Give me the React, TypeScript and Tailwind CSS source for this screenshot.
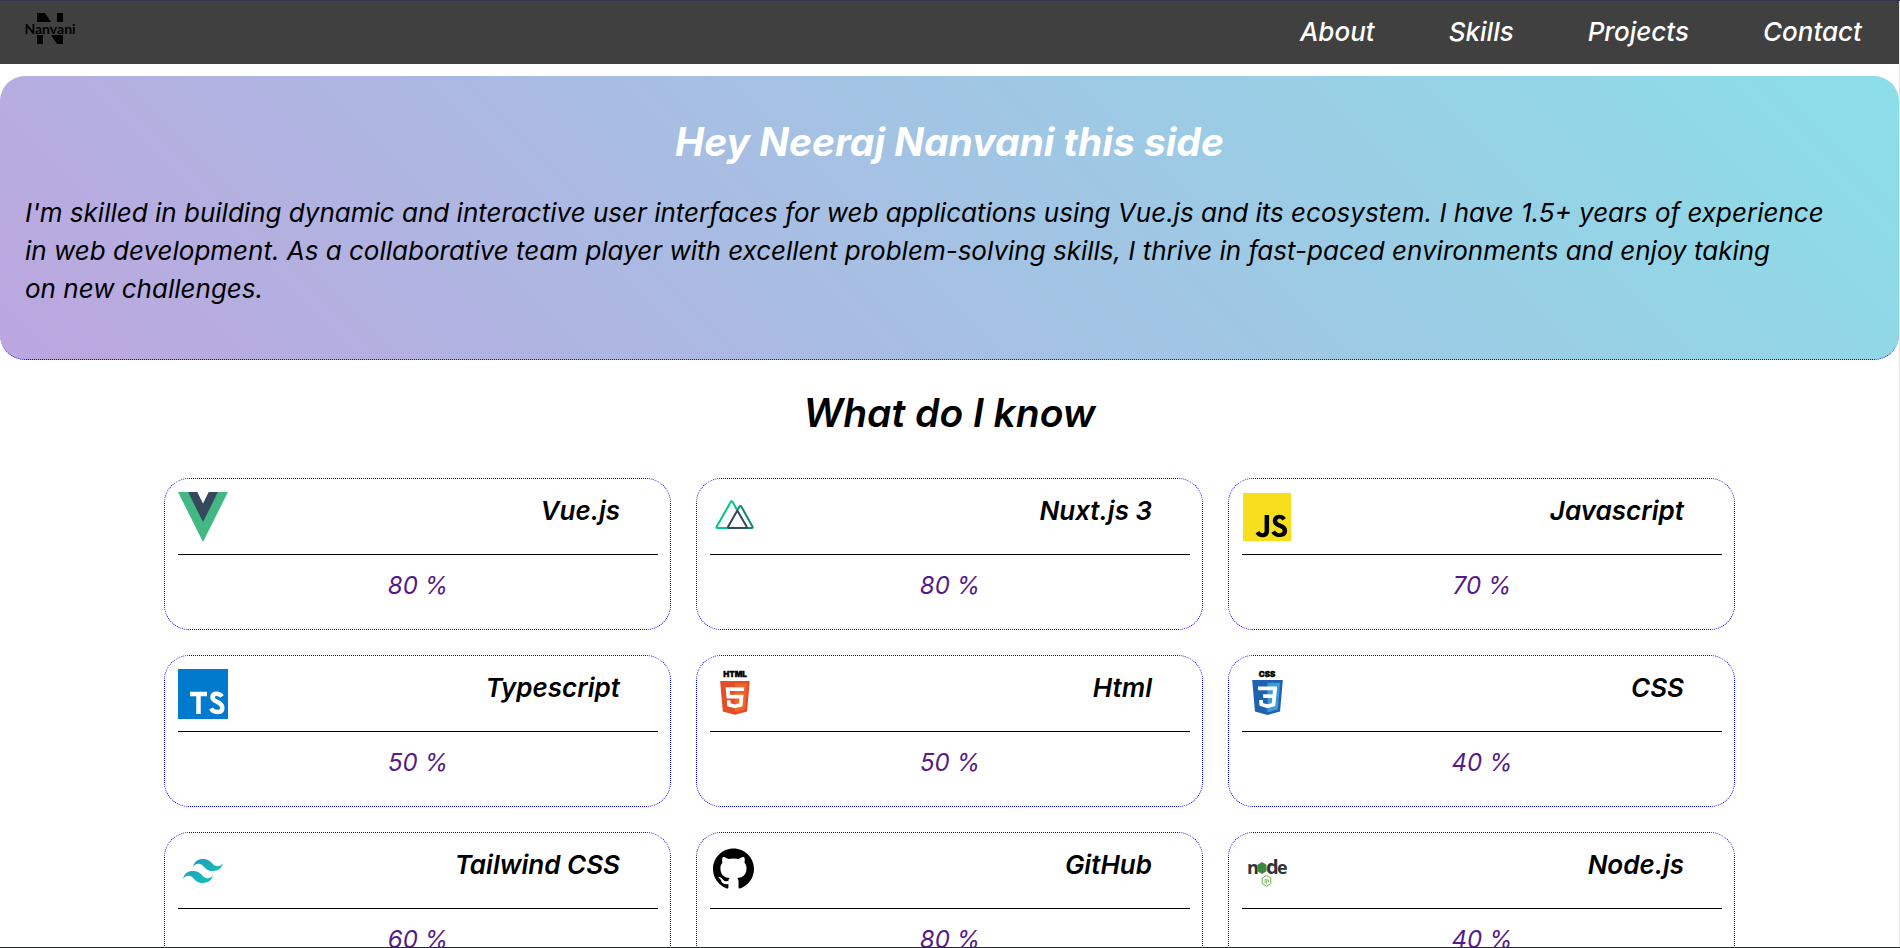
import type { ReactNode } from "react";
import { SiGithub, SiJavascript, SiTailwindcss, SiTypescript } from "react-icons/si";

const navLinks = ["About", "Skills", "Projects", "Contact"];

function Logo() {
  return (
    <svg viewBox="0 0 50 32" className="h-8 w-[50px] overflow-visible" role="img" aria-label="Nanvani">
      <path d="M12 0h8l6 9H12zM32 0h6v9h-6zM12 22h6v9h-6zM26 22h12v9h-6z" fill="#000" />
      <text x="25" y="20.500" textAnchor="middle" fontSize="14" fontWeight="700" fontFamily="Lato, sans-serif">
        Nanvani
      </text>
    </svg>
  );
}

function VueIcon() {
  return (
    <svg viewBox="0 0 50 50" className="size-full">
      <path d="M0 0h10l15 26L40 0h10L25 50z" fill="#42b883" />
      <path d="M10 0h9.3L25 11.500 30.700 0H40L25 30z" fill="#35495e" />
    </svg>
  );
}

function NuxtIcon() {
  return (
    <svg viewBox="0 0 50 50" className="size-full" fill="none" strokeWidth="2" strokeLinejoin="round" strokeLinecap="round">
      <path d="M18 36H7.500q-1.500 0-.7-1.500L20.700 10q1-1.600 2 0l4 7.200" stroke="#00c58e" />
      <path d="M28 17l1.400-2.300q1-1.600 2 0l11 19.800q.8 1.500-.7 1.500H37" stroke="#108775" />
      <path d="M27.300 18.500L36.600 34.500q.6 1.500-1 1.500H19q-1.500 0-.8-1.500z" stroke="#2f495e" />
    </svg>
  );
}

function JavascriptIcon() {
  return (
    <svg viewBox="0 0 50 50" className="size-full">
      <rect x="4" y="15" width="42" height="32" fill="#000" />
      <SiJavascript x={1} y={1} size={48} color="#f7df1e" />
    </svg>
  );
}

function TypescriptIcon() {
  return (
    <svg viewBox="0 0 50 50" className="size-full">
      <rect width="50" height="50" fill="#007acc" />
      <g fill="none" stroke="#fff" strokeWidth="4.500">
        <path d="M12 25h17M20.500 25v20" />
        <path d="M44 27.500q-2-2.700-5.300-2.700-4.200 0-4.200 3.500 0 2.500 4.500 4.500 5.300 2.200 5.300 5.900 0 4.300-5 4.300-4.300 0-6.300-3.500" />
      </g>
    </svg>
  );
}

function HtmlIcon() {
  return (
    <svg viewBox="0 0 50 50" className="size-full">
      <text x="25" y="8" textAnchor="middle" fontSize="8" fontWeight="900" fontFamily="Inter, sans-serif" stroke="#000" strokeWidth=".4">
        HTML
      </text>
      <g transform="translate(8 12) scale(1.410)">
        <path d="M1.500 0h21l-1.910 21.563L11.977 24l-8.564-2.438z" fill="#e44d26" />
        <path d="M12 1.800h8.600l-1.600 18.400-7 2z" fill="#f16529" />
        <path d="M8.531 9.750l-.232-2.718 10.059.003.230-2.622L5.412 4.410l.698 8.010h9.126l-.326 3.426-2.910.804-2.955-.810-.188-2.110H6.248l.330 4.171L12 19.351l5.379-1.443.744-8.157z" fill="#fff" />
      </g>
    </svg>
  );
}

function CssIcon() {
  return (
    <svg viewBox="0 0 50 50" className="size-full">
      <text x="25" y="8" textAnchor="middle" fontSize="8" fontWeight="900" fontFamily="Inter, sans-serif" stroke="#000" strokeWidth=".4">
        CSS
      </text>
      <g transform="translate(8 11) scale(1.460)">
        <path d="M1.500 0h21l-1.910 21.563L11.977 24l-8.565-2.438z" fill="#2062af" />
        <path d="M12 1.800h8.600l-1.600 18.400-7 2z" fill="#3c9cd7" />
        <path d="M18.590 4.413L5.410 4.410l.213 2.622 10.125.002-.255 2.716h-6.640l.240 2.573h6.182l-.366 3.523-2.910.804-2.956-.810-.188-2.110h-2.610l.290 3.855L12 19.288l5.373-1.530z" fill="#fff" />
      </g>
    </svg>
  );
}

function TailwindIcon() {
  return (
    <svg viewBox="0 0 50 50" className="size-full">
      <defs>
        <linearGradient id="wave" x1="0" y1="0" x2="1" y2="1">
          <stop offset="0" stopColor="#2298bd" />
          <stop offset="1" stopColor="#14c6b7" />
        </linearGradient>
      </defs>
      <SiTailwindcss x={5} y={5} size={40} fill="url(#wave)" />
    </svg>
  );
}

function GithubIcon() {
  return (
    <svg viewBox="0 0 50 50" className="size-full">
      <SiGithub x={3} y={2} size={41} color="#000" />
    </svg>
  );
}

function NodeIcon() {
  return (
    <svg viewBox="0 0 50 50" className="size-full">
      <g fontFamily="'Open Sans', sans-serif" fontWeight="700" fill="#333">
        <text x="5" y="27.500" fontSize="18">n</text>
        <text x="24" y="27.500" fontSize="20">d</text>
        <text x="35" y="27.500" fontSize="18">e</text>
      </g>
      <path d="M20 16l4.500 2.700v6.600L20 28l-4.500-2.700v-6.600z" fill="#3c873a" />
      <g fill="none" stroke="#6cb054" strokeWidth="1">
        <path d="M24.500 29.500l4.300 2.500v5.500l-4.300 2.800-4.300-2.800V32z" />
        <path d="M23 37v-3.500h1.500V38M26.500 36.500v-2.500h-1.500" strokeWidth=".8" />
      </g>
    </svg>
  );
}

type Skill = { name: string; level: number; icon: ReactNode };

const skills: Skill[] = [
  { name: "Vue.js", level: 80, icon: <VueIcon /> },
  { name: "Nuxt.js 3", level: 80, icon: <NuxtIcon /> },
  { name: "Javascript", level: 70, icon: <JavascriptIcon /> },
  { name: "Typescript", level: 50, icon: <TypescriptIcon /> },
  { name: "Html", level: 50, icon: <HtmlIcon /> },
  { name: "CSS", level: 40, icon: <CssIcon /> },
  { name: "Tailwind CSS", level: 60, icon: <TailwindIcon /> },
  { name: "GitHub", level: 80, icon: <GithubIcon /> },
  { name: "Node.js", level: 40, icon: <NodeIcon /> },
];

function SkillCard({ name, level, icon }: Skill) {
  return (
    <article className="h-[152px] rounded-[25px] border border-dotted border-[#0000ff] py-[13px] pr-3 pl-[13px]">
      <div className="flex justify-between border-b border-black pb-3">
        <div className="size-[50px] not-italic" aria-hidden="true">
          {icon}
        </div>
        <h3 className="pr-[38px] text-[26px] leading-[38px] font-semibold">{name}</h3>
      </div>
      <p className="pt-3 text-center text-[24px] leading-[38px] text-[#551a8b]">{level} %</p>
    </article>
  );
}

export default function App() {
  return (
    <div className="flex h-screen flex-col border-y border-t-[#32384a] border-b-[#1f2937] bg-white font-[Inter,'Open_Sans',sans-serif] text-black italic [font-feature-settings:'cv11']">
      <div className="flex-1 overflow-y-auto border-r border-[#e5e5e5] [scrollbar-width:none]">
        <header className="flex h-[63px] items-start justify-between bg-[#404040] pl-[25px]">
          <a href="#home" className="pt-3 not-italic">
            <Logo />
          </a>
          <nav className="flex pt-3">
            {navLinks.map((label) => (
              <a key={label} href={`#${label.toLowerCase()}`} className="px-[37px] text-[26px] leading-[38px] font-medium text-white">
                {label}
              </a>
            ))}
          </nav>
        </header>
        <main>
          <section
            id="about"
            className="mt-3 rounded-[25px] border-b border-dotted border-[#0000ff] bg-[linear-gradient(45deg,#bca6df,#8bdfe8)] px-[25px] pt-9 pb-[51px]"
          >
            <h1 className="text-center text-[39px] leading-[60px] font-bold text-white">Hey Neeraj Nanvani this side</h1>
            <p className="pt-[22px] text-[26px] leading-[38px]">
              I'm skilled in building dynamic and interactive user interfaces for web applications using Vue.js and its
              ecosystem. I have 1.5+ years of experience <br className="hidden 2xl:inline" />
              in web development. As a collaborative team player with excellent problem-solving skills, I thrive in
              fast-paced environments and enjoy taking <br className="hidden 2xl:inline" />
              on new challenges.
            </p>
          </section>
          <section id="skills">
            <h2 className="pt-6 text-center text-[39px] leading-[58px] font-semibold">What do I know</h2>
            <div className="grid grid-cols-3 gap-[25px] px-[164px] pt-9 pb-9">
              {skills.map((skill) => (
                <SkillCard key={skill.name} {...skill} />
              ))}
            </div>
          </section>
        </main>
      </div>
    </div>
  );
}
